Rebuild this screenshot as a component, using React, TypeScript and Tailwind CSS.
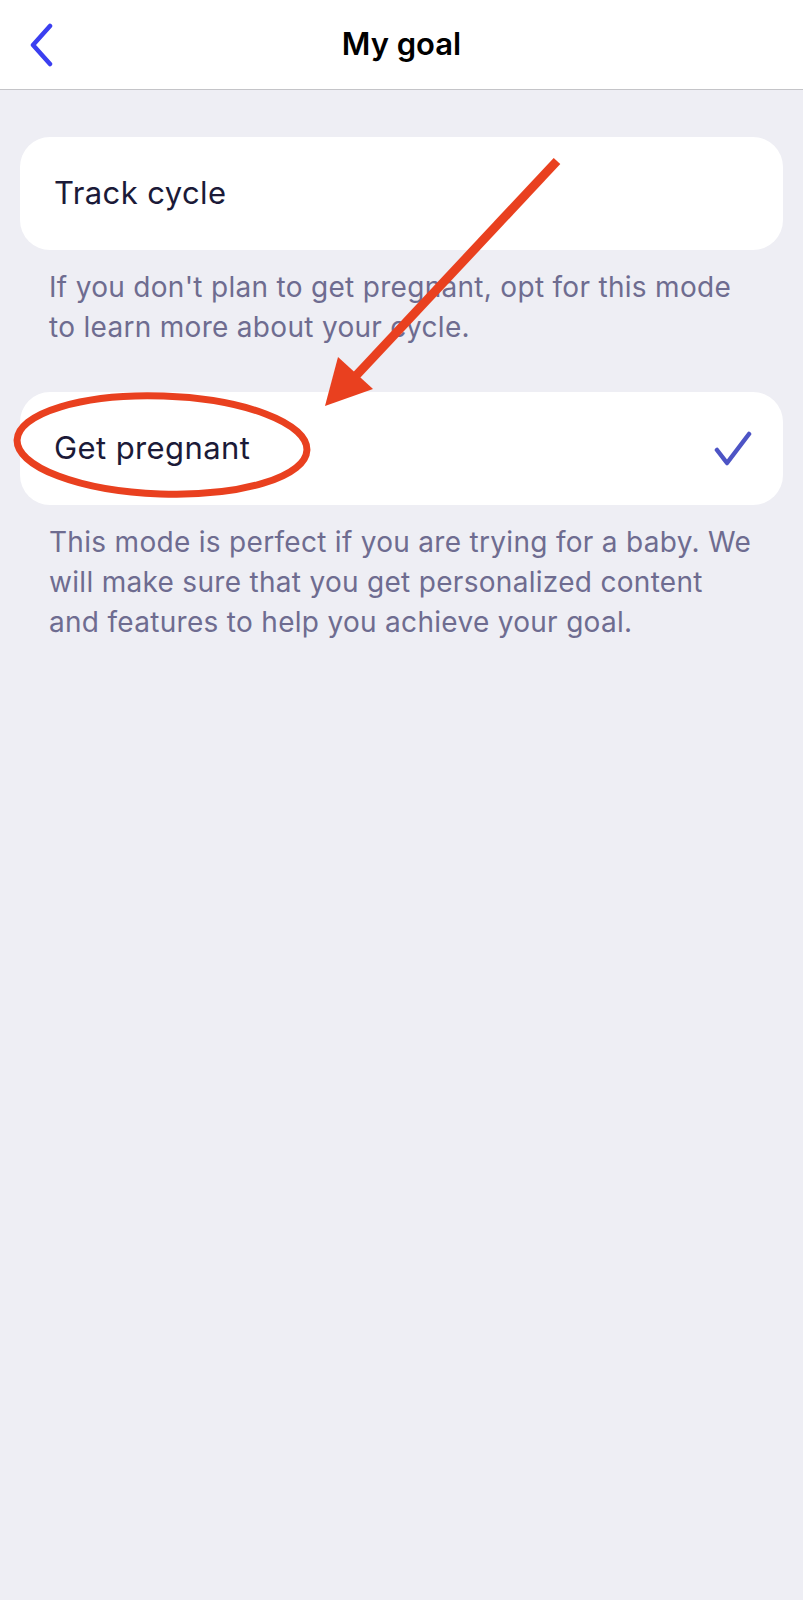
const goals = [
  {
    title: 'Track cycle',
    desc: "If you don't plan to get pregnant, opt for this mode to learn more about your cycle.",
    selected: false,
  },
  {
    title: 'Get pregnant',
    desc: 'This mode is perfect if you are trying for a baby. We will make sure that you get personalized content and features to help you achieve your goal.',
    selected: true,
  },
];

export default function App() {
  return (
    <div className="relative w-[803px] min-h-[1600px] bg-[#eeeef4] font-['Inter',sans-serif]">
      <header className="grid h-[90px] grid-cols-[1fr_auto_1fr] items-center border-b border-[#c4c4c8] bg-white">
        <div className="pl-[28px]">
          <svg width="26" height="44" viewBox="0 0 26 44" fill="none">
            <path d="M22 3 L5 22 L22 41" stroke="#3b3ff0" strokeWidth="4.5" strokeLinecap="round" strokeLinejoin="round" />
          </svg>
        </div>
        <h1 className="text-[31px] font-semibold tracking-[0px] text-black">My goal</h1>
        <div />
      </header>

      <main className="flex flex-col px-5 pt-[47px]">
        {goals.map((g, i) => (
          <div key={g.title} className={i > 0 ? 'mt-[45px]' : ''}>
            <div className="flex h-[113px] items-center justify-between rounded-[30px] bg-white pl-[34px] pr-[30px]">
              <span className="text-[31px] tracking-[0.4px] text-[#1b1a38]">{g.title}</span>
              {g.selected && (
                <svg width="40" height="36" viewBox="0 0 40 36" fill="none">
                  <path d="M4 19 L14 32 L36 3" stroke="#4d54c5" strokeWidth="4.5" strokeLinecap="round" strokeLinejoin="round" />
                </svg>
              )}
            </div>
            <p className="mt-[17px] px-[29px] text-[28px] leading-[40px] tracking-[0.3px] text-[#6e6c90]">{g.desc}</p>
          </div>
        ))}
      </main>

      {/* annotation overlay */}
      <svg className="pointer-events-none absolute left-0 top-0" width="803" height="600" viewBox="0 0 803 600">
        <line x1="557" y1="161" x2="352" y2="380" stroke="#e9401f" strokeWidth="9" />
        <polygon points="325,406 338,357 373,389" fill="#e9401f" />
        <ellipse cx="162" cy="445" rx="145" ry="49" fill="none" stroke="#e9401f" strokeWidth="7" transform="rotate(2 162 445)" />
      </svg>
    </div>
  );
}
